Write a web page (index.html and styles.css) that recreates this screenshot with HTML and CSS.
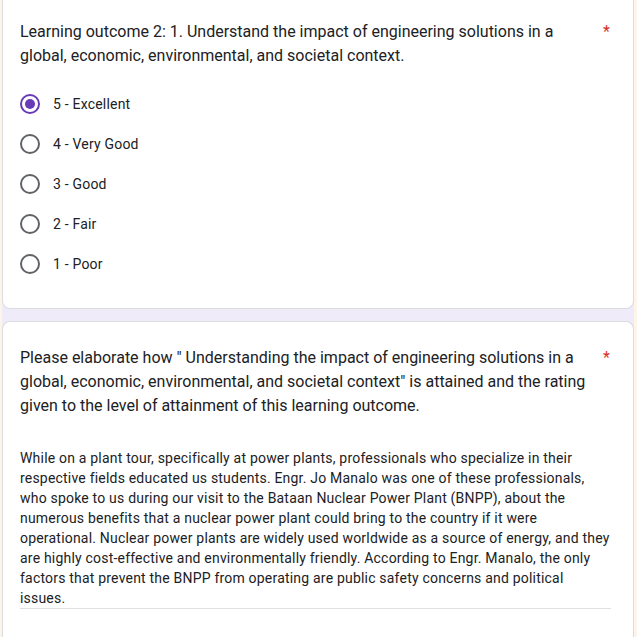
FILE: index.html
```html
<!DOCTYPE html>
<html>
<head>
<meta charset="utf-8">
<link rel="stylesheet" href="styles.css">
</head>
<body>
<div class="page">
  <div class="card card-first">
    <div class="title-row">
      <div class="title">Learning outcome 2: 1. Understand the impact of engineering solutions in a global, economic, environmental, and societal context.</div>
      <span class="req">*</span>
    </div>
    <div class="options">
      <div class="option"><span class="radio checked"></span><span class="label">5 - Excellent</span></div>
      <div class="option"><span class="radio"></span><span class="label">4 - Very Good</span></div>
      <div class="option"><span class="radio"></span><span class="label">3 - Good</span></div>
      <div class="option"><span class="radio"></span><span class="label">2 - Fair</span></div>
      <div class="option"><span class="radio"></span><span class="label">1 - Poor</span></div>
    </div>
  </div>
  <div class="card card-second">
    <div class="title-row">
      <div class="title">Please elaborate how " Understanding the impact of engineering solutions in a global, economic, environmental, and societal context" is attained and the rating given to the level of attainment of this learning outcome.</div>
      <span class="req">*</span>
    </div>
    <div class="answer">
      <div class="answer-text">While on a plant tour, specifically at power plants, professionals who specialize in their respective fields educated us students. Engr. Jo Manalo was one of these professionals, who spoke to us during our visit to the Bataan Nuclear Power Plant (BNPP), about the numerous benefits that a nuclear power plant could bring to the country if it were operational. Nuclear power plants are widely used worldwide as a source of energy, and they are highly cost-effective and environmentally friendly. According to Engr. Manalo, the only factors that prevent the BNPP from operating are public safety concerns and political issues.</div>
    </div>
  </div>
</div>
</body>
</html>
```
FILE: styles.css
```css
html, body {
  margin: 0;
  padding: 0;
  background: #fdf4ea;
  height: 637px;
  overflow: hidden;
}
body {
  font-family: Roboto, "Liberation Sans", Arial, sans-serif;
  color: #202124;
}
.page {
  margin: 0 3px 0 2px;
  background: #f0ebf8;
  display: flex;
  flex-direction: column;
  gap: 12px;
  min-height: 637px;
}
.card {
  background: #fff;
  border: 1px solid #dadce0;
  border-radius: 8px;
}
.card-first {
  border-top: none;
  border-radius: 0 0 8px 8px;
  padding: 20px 0 24px 17px;
}
.card-second {
  padding: 24px 0 0 17px;
  flex: 1;
  border-bottom: none;
  border-radius: 8px 8px 0 0;
}
.title-row {
  display: flex;
  align-items: flex-start;
}
.title {
  width: 575px;
  font-size: 16px;
  line-height: 24px;
}
.req {
  color: #d93025;
  font-size: 16px;
  line-height: 24px;
  margin-left: 8px;
}
.options {
  margin-top: 16px;
  display: flex;
  flex-direction: column;
}
.option {
  height: 40px;
  display: flex;
  align-items: center;
  gap: 13px;
}
.radio {
  box-sizing: border-box;
  width: 20px;
  height: 20px;
  border-radius: 50%;
  border: 2px solid #5f6368;
  display: flex;
  align-items: center;
  justify-content: center;
}
.radio.checked {
  border-color: #673ab7;
}
.radio.checked::after {
  content: "";
  width: 10px;
  height: 10px;
  border-radius: 50%;
  background: #673ab7;
}
.label {
  font-size: 14px;
  letter-spacing: 0.2px;
}
.answer {
  margin-top: 30px;
  width: 591px;
  border-bottom: 1px solid #e0e0e0;
}
.answer-text {
  font-size: 14px;
  line-height: 20px;
  letter-spacing: 0.2px;
}
```
